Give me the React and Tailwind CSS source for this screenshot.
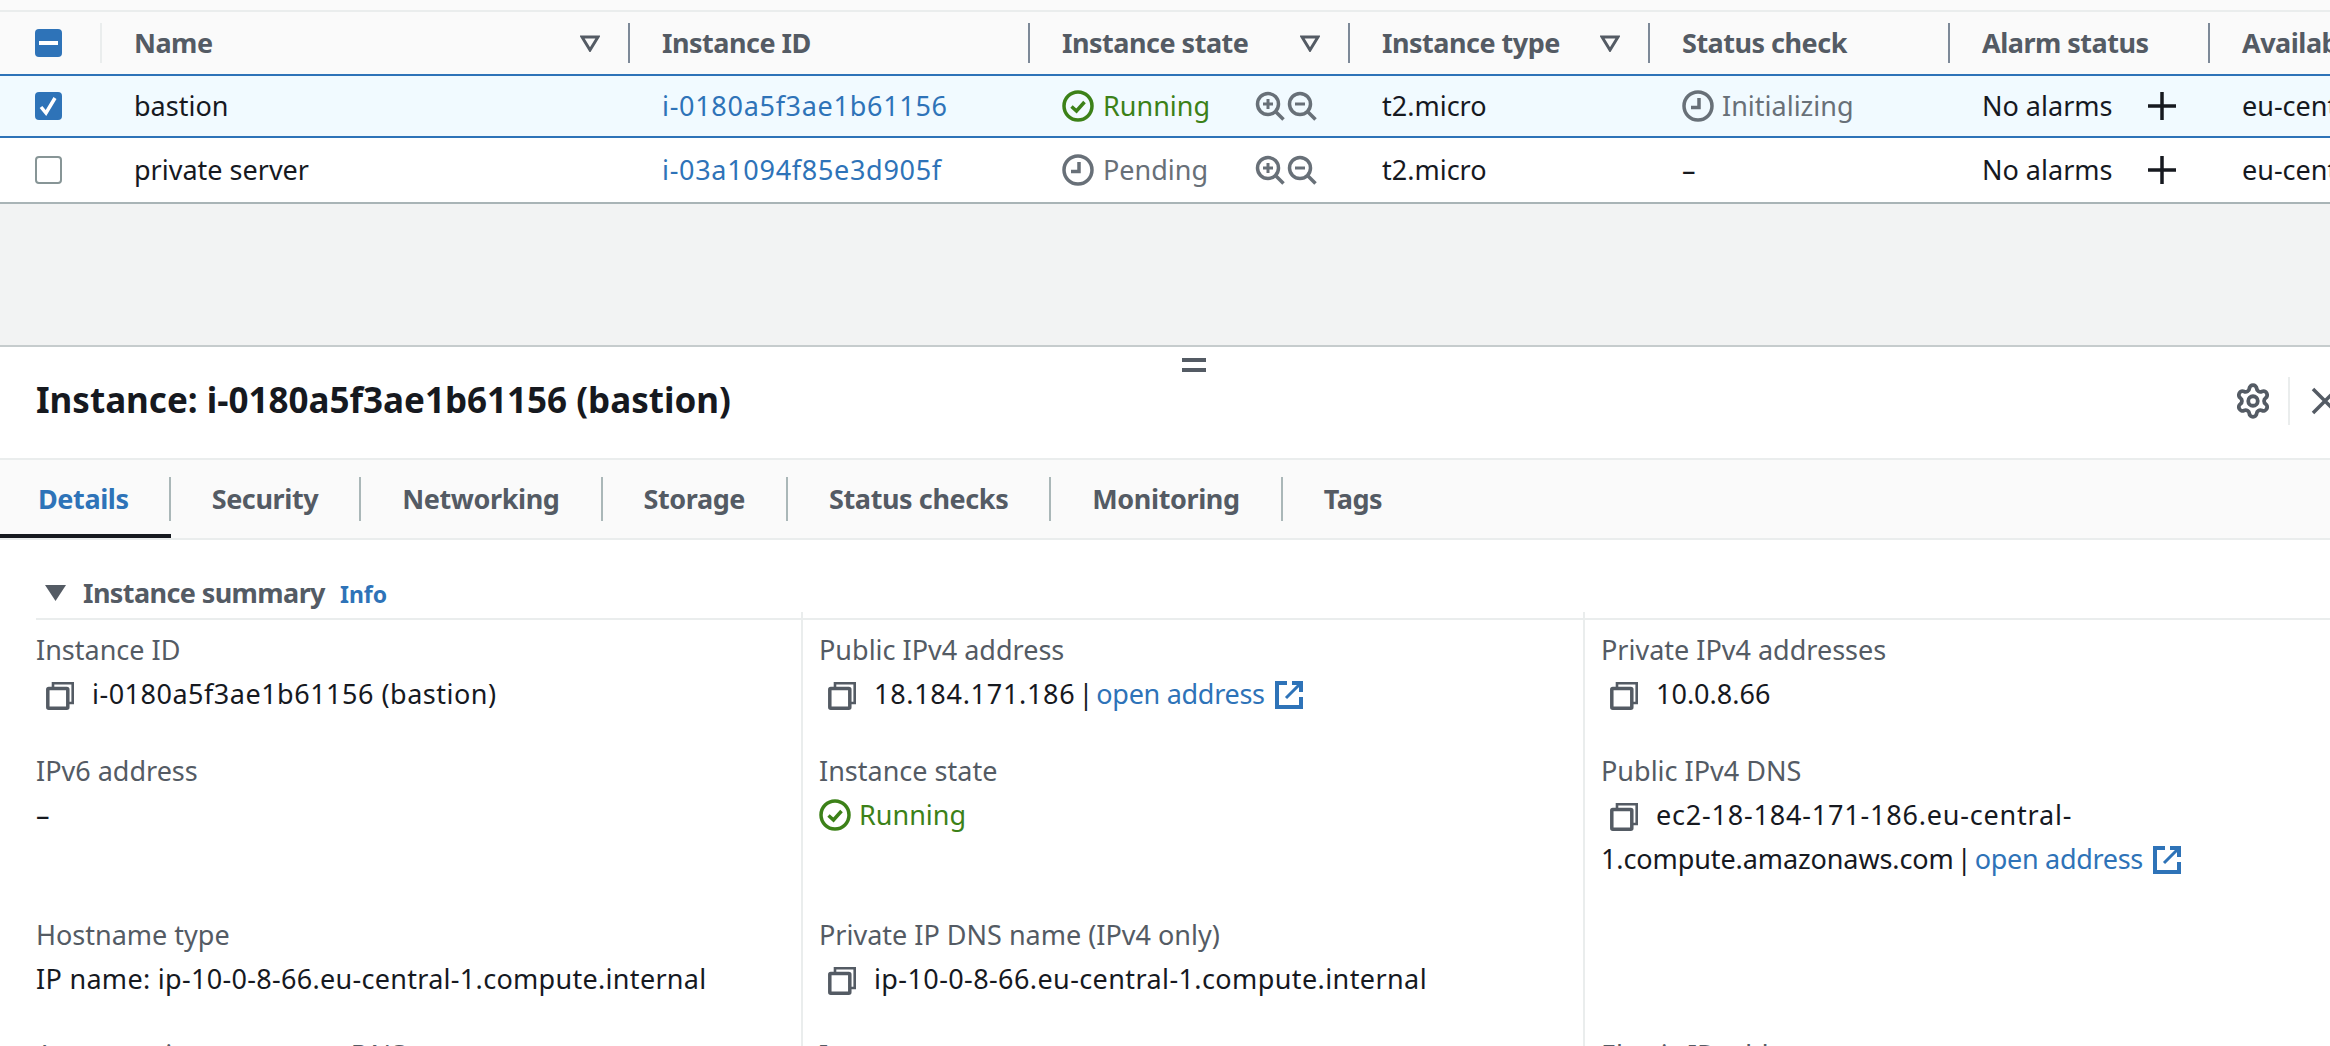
import { Settings } from "lucide-react";

const tableCols = "grid grid-cols-[102px_528px_400px_320px_300px_300px_260px_120px]";

const CheckIcon = ({ className }) => (
  <svg className={className} viewBox="0 0 32 32" fill="none" stroke="currentColor" strokeWidth="3.5">
    <circle cx="16" cy="16" r="14" />
    <path d="M9.5 16.5l5 4.5 8-9" strokeWidth="3.5" />
  </svg>
);

const ClockIcon = ({ className }) => (
  <svg className={className} viewBox="0 0 32 32" fill="none" stroke="currentColor" strokeWidth="3.5">
    <circle cx="16" cy="16" r="14" />
    <path d="M17 8v9.5H9" />
  </svg>
);

const ZoomIcon = ({ plus }) => (
  <svg className="w-[30px] h-[30px] text-[#687078]" viewBox="0 0 30 30" fill="none" stroke="currentColor" strokeWidth="3.5">
    <circle cx="13" cy="13" r="10.5" />
    <path d="M21 21l7.5 7.5" />
    <path d="M8 13h10" strokeWidth="3" />
    {plus && <path d="M13 8v10" strokeWidth="3" />}
  </svg>
);

const FilterIcon = () => (
  <svg className="w-[20px] h-[17px] text-[#545b64]" viewBox="0 0 20 17" fill="none" stroke="currentColor" strokeWidth="3">
    <path d="M2 2h16l-8 13z" />
  </svg>
);

const PlusIcon = () => (
  <svg className="w-[28px] h-[28px] text-[#16191f]" viewBox="0 0 28 28" fill="none" stroke="currentColor" strokeWidth="3.500">
    <path d="M14 0v28M0 14h28" />
  </svg>
);

const CopyIcon = () => (
  <svg className="w-[28px] h-[28px] shrink-0 text-[#545b64]" viewBox="0 0 28 28" fill="none" stroke="currentColor" strokeWidth="3.500">
    <rect x="1.800" y="6.500" width="20" height="19.700" rx="1" />
    <path d="M7 5V1.300h19.700V21H23" strokeWidth="2.600" />
  </svg>
);

const ExternalIcon = () => (
  <svg className="w-[28px] h-[28px] inline-block align-[-5px] ml-[10px] text-[#2e73b8]" viewBox="0 0 28 28" fill="none" stroke="currentColor" strokeWidth="4">
    <path d="M12 2H2v24h24V16" />
    <path d="M11 17L25 3" strokeWidth="3" />
    <path d="M17 2h9v9" />
  </svg>
);

const HeaderCell = ({ label, filter, pr = "pr-[22px]" }) => (
  <div className={`h-[40px] border-r-2 border-[#7d8998] pl-[32px] ${pr} flex items-center justify-between font-bold tracking-[-0.5px] text-[#545b64] whitespace-nowrap`}>
    <span>{label}</span>
    {filter && <FilterIcon />}
  </div>
);

const Cell = ({ children }) => (
  <div className="pl-[32px] flex items-center whitespace-nowrap overflow-hidden">{children}</div>
);

const Row = ({ name, id, selected, state, status }) => (
  <div className={`${tableCols} h-full text-[#16191f]`}>
    <div className="flex items-center pl-[35px]">
      {selected ? (
        <div className="w-[27px] h-[28px] rounded-[4px] bg-[#2e73b8] flex items-center justify-center">
          <svg className="w-[19px] h-[20px]" viewBox="0 0 19 20" fill="none" stroke="white" strokeWidth="3.500">
            <path d="M2 11l5 6 9-15" />
          </svg>
        </div>
      ) : (
        <div className="w-[27px] h-[28px] rounded-[4px] border-2 border-[#879596] bg-white" />
      )}
    </div>
    <Cell>{name}</Cell>
    <Cell><span className="text-[#2e73b8] tracking-[0.7px]">{id}</span></Cell>
    <Cell>
      {state === "Running" ? (
        <CheckIcon className="w-[32px] h-[32px] shrink-0 text-[#3c8118]" />
      ) : (
        <ClockIcon className="w-[32px] h-[32px] shrink-0 text-[#687078]" />
      )}
      <span className={`ml-[9px] w-[152px] ${state === "Running" ? "text-[#3c8118]" : "text-[#687078]"}`}>{state}</span>
      <ZoomIcon plus />
      <span className="ml-[2px]"><ZoomIcon /></span>
    </Cell>
    <Cell>t2.micro</Cell>
    <Cell>
      {status === "Initializing" ? (
        <>
          <ClockIcon className="w-[32px] h-[32px] shrink-0 text-[#687078]" />
          <span className="ml-[8px] text-[#687078]">{status}</span>
        </>
      ) : (
        status
      )}
    </Cell>
    <Cell>
      <span className="w-[166px]">No alarms</span>
      <PlusIcon />
    </Cell>
    <Cell>eu-central-1a</Cell>
  </div>
);

const Tab = ({ label, active, last }) => (
  <div className="relative h-[78px] flex items-center">
    <div className={`h-[44px] flex items-center font-bold tracking-[-0.4px] ${active ? "pl-[38px] pr-[40px] text-[#2e73b8]" : "px-[41px] text-[#545b64]"} ${last ? "" : "border-r-2 border-[#aab7b8]"}`}>
      {label}
    </div>
    {active && <div className="absolute left-0 right-0 bottom-0 h-[4px] bg-[#16191f]" />}
  </div>
);

const Field = ({ label, children, first, left }) => (
  <div className={`${left ? "" : "border-l-2 border-[#eaeded] pl-[16px]"} ${first ? "pt-[16px] pb-[33px]" : "pb-[32px]"}`}>
    <div className="h-[44px] leading-[44px] text-[#545b64] whitespace-nowrap">{label}</div>
    <div className="leading-[44px] text-[#16191f] whitespace-nowrap">{children}</div>
  </div>
);

const CopyValue = ({ children, inset = "ml-[9px]" }) => (
  <>
    <span className={`inline-block align-[-6px] ${inset} mr-[18px]`}><CopyIcon /></span>
    {children}
  </>
);

const Link = ({ children }) => <span className="text-[#2e73b8] tracking-[-0.3px]">{children}</span>;

const Pipe = () => <span className="mx-[-4px]"> | </span>;

export default function App() {
  return (
    <div className="w-[2330px] h-[1046px] overflow-hidden bg-white font-['Noto_Sans',sans-serif] text-[27px]">
      {/* instance table */}
      <div className="h-[10px] bg-[#fafafa]" />
      <div className="border-t-2 border-[#eaeded] h-[64px] bg-[#fafafa]">
        <div className={`${tableCols} h-full items-center`}>
          <div className="h-[40px] border-r-2 border-[#eaeded] flex items-center pl-[35px]">
            <div className="w-[27px] h-[28px] rounded-[4px] bg-[#2e73b8] flex items-center justify-center">
              <div className="w-[19px] h-[4px] bg-white" />
            </div>
          </div>
          <HeaderCell label="Name" filter pr="pr-[28px]" />
          <HeaderCell label="Instance ID" />
          <HeaderCell label="Instance state" filter pr="pr-[28px]" />
          <HeaderCell label="Instance type" filter pr="pr-[28px]" />
          <HeaderCell label="Status check" />
          <HeaderCell label="Alarm status" />
          <div className="pl-[32px] font-bold tracking-[-0.5px] text-[#545b64] whitespace-nowrap overflow-hidden">Availability Zone</div>
        </div>
      </div>
      <div className="h-[64px] border-y-2 border-[#2e73b8] bg-[#f1faff]">
        <Row name="bastion" id="i-0180a5f3ae1b61156" selected state="Running" status="Initializing" />
      </div>
      <div className="h-[66px] border-b-2 border-[#a9b4b6]">
        <Row name="private server" id="i-03a1094f85e3d905f" state="Pending" status="–" />
      </div>
      <div className="h-[143px] bg-[#f2f3f3] border-b-2 border-[#c6cccd]" />

      {/* split panel header */}
      <div className="relative h-[111px] flex items-center justify-between pl-[36px]">
        <div className="absolute left-[1182px] top-[11px] w-[24px] h-[14px] border-y-4 border-[#545b64]" />
        <h2 className="font-bold text-[35px] leading-[48px] mb-[6px] text-[#16191f] whitespace-nowrap">Instance: i-0180a5f3ae1b61156 (bastion)</h2>
        <div className="flex items-center mr-[-9px] mb-[4px]">
          <Settings className="w-[38px] h-[38px] text-[#545b64]" strokeWidth={2.4} />
          <div className="ml-[16px] h-[48px] border-l-2 border-[#eaeded] pl-[21px] flex items-center">
            <svg className="w-[28px] h-[28px] text-[#545b64]" viewBox="0 0 28 28" fill="none" stroke="currentColor" strokeWidth="3.500">
              <path d="M2 2l24 24M26 2L2 26" />
            </svg>
          </div>
        </div>
      </div>

      {/* tabs */}
      <div className="h-[82px] border-y-2 border-[#eaeded] bg-[#fafafa] flex">
        <Tab label="Details" active />
        <Tab label="Security" />
        <Tab label="Networking" />
        <Tab label="Storage" />
        <Tab label="Status checks" />
        <Tab label="Monitoring" />
        <Tab label="Tags" last />
      </div>

      {/* instance summary */}
      <div className="pl-[36px]">
        <div className="h-[80px] pt-[37px] border-b-2 border-[#eaeded] flex items-start">
          <svg className="w-[21px] h-[16px] ml-[9px] mt-[8px] text-[#545b64]" viewBox="0 0 21 16" fill="currentColor">
            <path d="M0 0h21L10.500 16z" />
          </svg>
          <span className="ml-[17px] font-bold tracking-[-0.6px] text-[#545b64] leading-[32px]">Instance summary</span>
          <span className="ml-[15px] font-bold text-[23px] text-[#2e73b8] leading-[34px]">Info</span>
        </div>
        <div className="relative grid grid-cols-[765px_782px_747px] -mt-[8px]">
          <Field first left label="Instance ID">
            <CopyValue inset="ml-[10px]"><span className="tracking-[0.5px]">i-0180a5f3ae1b61156 (bastion)</span></CopyValue>
          </Field>
          <Field first label="Public IPv4 address">
            <CopyValue><span className="tracking-[0.7px]">18.184.171.186</span><Pipe /><Link>open address</Link><ExternalIcon /></CopyValue>
          </Field>
          <Field first label="Private IPv4 addresses">
            <CopyValue>10.0.8.66</CopyValue>
          </Field>

          <Field left label="IPv6 address">–</Field>
          <Field label="Instance state">
            <span className="flex items-center h-[44px] text-[#3c8118]">
              <CheckIcon className="w-[32px] h-[32px] shrink-0 mr-[8px]" />
              Running
            </span>
          </Field>
          <Field label="Public IPv4 DNS">
            <CopyValue><span className="tracking-[0.8px]">ec2-18-184-171-186.eu-central-</span></CopyValue>
            <br />
            <span className="tracking-[-0.1px]">1.compute.amazonaws.com</span><Pipe /><Link>open address</Link><ExternalIcon />
          </Field>

          <Field left label="Hostname type"><span className="tracking-[0.3px]">IP name: ip-10-0-8-66.eu-central-1.compute.internal</span></Field>
          <Field label="Private IP DNS name (IPv4 only)">
            <CopyValue><span className="tracking-[0.4px]">ip-10-0-8-66.eu-central-1.compute.internal</span></CopyValue>
          </Field>
          <Field label="">{""}</Field>

          <Field left label="Answer private resource DNS name">–</Field>
          <Field label="Instance type">t2.micro</Field>
          <Field label="Elastic IP addresses">–</Field>
        </div>
      </div>
    </div>
  );
}
